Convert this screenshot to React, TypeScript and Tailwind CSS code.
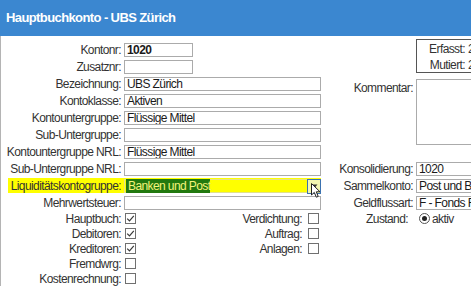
import React from 'react'

type FieldProps = {
  label: string
  value?: string
  narrow?: boolean
  bold?: boolean
}

function Field({ label, value = '', narrow, bold }: FieldProps) {
  return (
    <div className="flex h-[17px] items-center">
      <div className="w-[120px] shrink-0 text-right whitespace-nowrap">{label}</div>
      <input
        readOnly
        defaultValue={value}
        className={`ml-[3px] h-[14px] border border-[#ababab] bg-white px-[2px] text-[12px] leading-[12px] text-[#1a1a1a] outline-none ${
          narrow ? 'w-[69px]' : 'w-[197px]'
        } ${bold ? 'font-bold' : ''}`}
      />
    </div>
  )
}

function Check({ checked }: { checked?: boolean }) {
  return (
    <span className="flex h-[11px] w-[11px] shrink-0 items-center justify-center border border-[#707070] bg-white">
      {checked && (
        <svg width="9" height="9" viewBox="0 0 9 9">
          <path d="M1.2 4.6 L3.5 6.9 L7.8 1.8" fill="none" stroke="#3a3a3a" strokeWidth="1.2" />
        </svg>
      )}
    </span>
  )
}

function RightField({ label, value }: { label: string; value: string }) {
  return (
    <div className="flex h-[17px] items-center">
      <div className="w-[91px] shrink-0 text-right whitespace-nowrap">{label}</div>
      <input
        readOnly
        defaultValue={value}
        className="ml-[3px] h-[14px] w-[80px] border border-[#ababab] bg-white px-[2px] text-[12px] leading-[12px] text-[#1a1a1a] outline-none"
      />
    </div>
  )
}

const checks = [
  { label: 'Hauptbuch:', on: true, mid: 'Verdichtung:' },
  { label: 'Debitoren:', on: true, mid: 'Auftrag:' },
  { label: 'Kreditoren:', on: true, mid: 'Anlagen:' },
  { label: 'Fremdwrg:', on: false },
  { label: 'Kostenrechnung:', on: false },
]

export default function App() {
  return (
    <div className="relative h-[288px] w-[471px] overflow-hidden bg-white font-['Liberation_Sans',Arial,sans-serif] text-[12px] leading-[14px] tracking-[-0.6px] text-[#333]">
      <div className="flex h-[36px] items-center bg-[#3b87d0] pl-[6px] text-[13px] font-bold text-white">
        Hauptbuchkonto - UBS Zürich
      </div>

      <div className="flex border-l border-[#b4b4b4]">
        {/* linke Spalte */}
        <div className="w-[321px] shrink-0 pt-[5px]">
          <Field label="Kontonr:" value="1020" narrow bold />
          <Field label="Zusatznr:" narrow />
          <Field label="Bezeichnung:" value="UBS Zürich" />
          <Field label="Kontoklasse:" value="Aktiven" />
          <Field label="Kontountergruppe:" value="Flüssige Mittel" />
          <Field label="Sub-Untergruppe:" />
          <Field label="Kontountergruppe NRL:" value="Flüssige Mittel" />
          <Field label="Sub-Untergruppe NRL:" />
          <div className="flex h-[17px] items-center">
            <div className="ml-[7px] flex h-[15px] items-center bg-[#ffff00]">
              <div className="w-[113px] shrink-0 text-right whitespace-nowrap">Liquiditätskontogruppe:</div>
              <div className="relative ml-[3px] flex h-[14px] w-[197px] items-center border border-[#e2e28a] pl-[1px]">
                <span className="bg-[#22790f] pl-[2px] text-[#f3f37a]">Banken und Post</span>
                <span className="absolute top-[-1px] right-[-1px] flex h-[15px] w-[14px] items-center justify-center border border-[#3b72b0] bg-[#f3f7b0]">
                  <svg width="7" height="5" viewBox="0 0 7 5">
                    <path d="M0.5 0.5 L3.5 4 L6.5 0.5 Z" fill="#333" />
                  </svg>
                </span>
              </div>
            </div>
          </div>
          <Field label="Mehrwertsteuer:" />

          {checks.map((c) => (
            <div key={c.label} className="flex h-[15px] items-center">
              <div className="w-[120px] shrink-0 text-right whitespace-nowrap">{c.label}</div>
              <span className="ml-[4px]">
                <Check checked={c.on} />
              </span>
              {c.mid && (
                <>
                  <div className="w-[166px] shrink-0 text-right whitespace-nowrap">{c.mid}</div>
                  <span className="ml-[6px]">
                    <Check />
                  </span>
                </>
              )}
            </div>
          ))}
        </div>

        {/* rechte Spalte */}
        <div className="w-[200px] shrink-0">
          <div className="mt-[3px] ml-[94px] h-[34px] w-[80px] border border-[#555] pt-[1px]">
            <div className="flex h-[16px] items-center">
              <span className="w-[48px] shrink-0 text-right">Erfasst:</span>
              <span className="ml-[3px]">2</span>
            </div>
            <div className="flex h-[16px] items-center">
              <span className="w-[48px] shrink-0 text-right">Mutiert:</span>
              <span className="ml-[3px]">2</span>
            </div>
          </div>

          <div className="mt-[6px] flex">
            <div className="w-[91px] shrink-0 pt-[2px] text-right">Kommentar:</div>
            <div className="ml-[3px] h-[66px] w-[80px] border border-[#ababab] bg-white" />
          </div>

          <div className="mt-[15px]">
            <RightField label="Konsolidierung:" value="1020" />
            <RightField label="Sammelkonto:" value="Post und Bank" />
            <RightField label="Geldflussart:" value="F - Fonds Flüssige Mittel" />
            <div className="flex h-[15px] items-center">
              <div className="w-[86px] shrink-0 text-right">Zustand:</div>
              <span className="ml-[11px] flex h-[11px] w-[11px] items-center justify-center rounded-full border border-[#555] bg-white">
                <span className="h-[5px] w-[5px] rounded-full bg-[#222]" />
              </span>
              <span className="ml-[2px]">aktiv</span>
            </div>
          </div>
        </div>
      </div>

      {/* Mauszeiger */}
      <svg className="absolute top-[183px] left-[311px]" width="11" height="16" viewBox="0 0 11 16">
        <path d="M0.5 0.5 L0.5 12 L3.3 9.4 L5.3 14.2 L7.2 13.4 L5.3 8.8 L9 8.8 Z" fill="#fff" stroke="#222" strokeWidth="1" />
      </svg>
    </div>
  )
}
